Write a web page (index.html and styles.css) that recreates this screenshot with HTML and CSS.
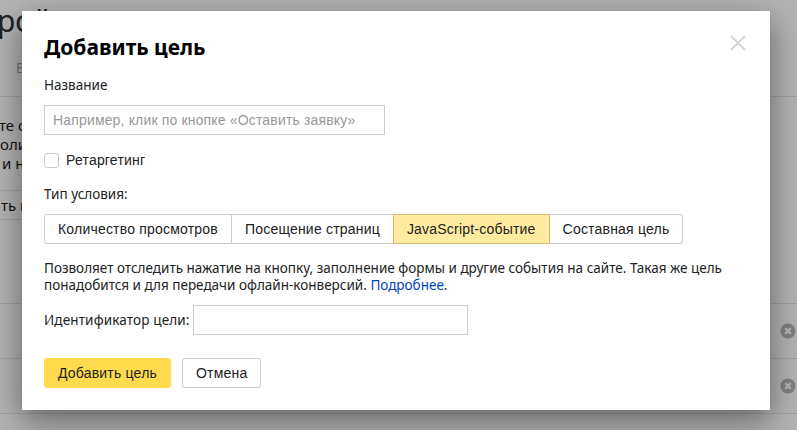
FILE: index.html
```html
<!DOCTYPE html>
<html lang="ru">
<head>
<meta charset="utf-8">
<title>Добавить цель</title>
<link rel="stylesheet" href="styles.css">
</head>
<body>
<div class="page">
  <div class="page-head">
    <div class="page-title">ройка</div>
    <div class="page-tab">Вебвизор</div>
  </div>
  <div class="page-info">
    <p class="info-a">те основные</p>
    <p>оличество</p>
    <p class="info-c">и не</p>
  </div>
  <div class="page-action"><span class="page-btn">ть цель</span></div>
  <div class="page-row"><svg class="row-x" viewBox="0 0 16 16"><circle cx="8" cy="8" r="7.5" fill="#7f7f7f"/><path d="M5.2 5.2l5.6 5.6M10.8 5.2l-5.6 5.6" stroke="#b2b2b2" stroke-width="2.4"/></svg></div>
  <div class="page-row"><svg class="row-x" viewBox="0 0 16 16"><circle cx="8" cy="8" r="7.5" fill="#7f7f7f"/><path d="M5.2 5.2l5.6 5.6M10.8 5.2l-5.6 5.6" stroke="#b2b2b2" stroke-width="2.4"/></svg></div>
  <div class="page-row page-row-last"></div>
</div>

<div class="modal">
  <svg class="modal-close" viewBox="0 0 16 16"><path d="M1 1l14 14M15 1L1 15" stroke="#d6d6d6" stroke-width="2" fill="none"/></svg>
  <h1 class="modal-title">Добавить цель</h1>
  <div class="label">Название</div>
  <input class="text-input name-input" type="text" placeholder="Например, клик по кнопке «Оставить заявку»">
  <label class="check"><span class="check-box"></span><span class="check-text">Ретаргетинг</span></label>
  <div class="label type-label">Тип условия:</div>
  <div class="segments">
    <span class="segment">Количество просмотров</span>
    <span class="segment">Посещение страниц</span>
    <span class="segment segment-on">JavaScript-событие</span>
    <span class="segment">Составная цель</span>
  </div>
  <p class="hint">Позволяет отследить нажатие на кнопку, заполнение формы и другие события на сайте. Такая же цель понадобится и для передачи офлайн-конверсий. <a href="#">Подробнее</a>.</p>
  <div class="id-row"><span class="label id-label">Идентификатор цели:</span><input class="text-input id-input" type="text"></div>
  <div class="actions">
    <button class="btn btn-primary" type="button">Добавить цель</button>
    <button class="btn" type="button">Отмена</button>
  </div>
</div>
</body>
</html>
```
FILE: styles.css
```css
* { box-sizing: border-box; }
html, body { margin: 0; height: 100%; }
body {
  width: 797px;
  height: 430px;
  overflow: hidden;
  position: relative;
  background: #b2b2b2;
  font-family: "Noto Sans", "Liberation Sans", sans-serif;
  color: #222;
}
.page { height: 430px; overflow: hidden; color: #111; font-size: 15px; }
.page-head { height: 97px; border-bottom: 1px solid #a0a0a0; }
.page-title { margin-left: -3px; padding-top: 2px; font-size: 30px; line-height: 38px; color: #222; }
.page-tab { margin-left: 16px; margin-top: 19px; color: #7c7670; font-size: 14px; line-height: 18px; }
.page-info { height: 93px; padding-top: 19px; }
.page-info p { margin: 0; line-height: 19px; white-space: nowrap; }
.info-a { margin-left: -1px !important; }
.info-c { margin-left: 2px !important; }
.page-action { height: 113px; }
.page-btn { display: block; width: 120px; height: 30px; margin-left: -40px; padding-left: 40px; border: 1px solid #a0a0a0; line-height: 28px; white-space: nowrap; }
.page-row { height: 55px; border-top: 1px solid #a0a0a0; display: flex; justify-content: flex-end; align-items: center; padding-right: 1px; }
.row-x { width: 16px; height: 16px; }
.page-row-last { height: 20px; }

.modal {
  position: absolute;
  left: 22px;
  top: 11px;
  width: 748px;
  height: 399px;
  background: #fff;
  padding: 20px 22px;
  box-shadow: 0 10px 30px rgba(0,0,0,.45);
}
.modal-close { position: absolute; left: 708px; top: 24px; width: 16px; height: 16px; }
.modal-title { margin: 0; font-size: 21px; line-height: 32px; font-weight: 700; color: #000; }
.label { font-size: 13.5px; line-height: 18px; color: #222; }
.modal-title + .label { margin-top: 13px; }
.text-input { display: block; height: 30px; border: 1px solid #ccc; border-radius: 0; background: #fff; outline: 0; padding: 0 8px; font: 14px "Liberation Sans", sans-serif; letter-spacing: .16px; }
.text-input::placeholder { color: #999; opacity: 1; }
.name-input { width: 341px; margin-top: 11px; }
.check { display: flex; align-items: center; margin-top: 17px; height: 16px; }
.check-box { width: 15px; height: 15px; border: 1px solid #ccc; border-radius: 3px; }
.check-text { margin-left: 7px; font: 14px "Liberation Sans", sans-serif; letter-spacing: .2px; color: #222; }
.type-label { margin-top: 17px; }
.segments { display: flex; margin-top: 11px; height: 30px; font: 14px/28px "Liberation Sans", sans-serif; letter-spacing: .2px; color: #222; }
.segment { border: 1px solid #ccc; border-left: 0; padding: 0 13px; background: #fff; white-space: nowrap; }
.segment:first-child { border-left: 1px solid #ccc; border-radius: 3px 0 0 3px; }
.segment:last-child { border-radius: 0 3px 3px 0; }
.segment-on { background: #ffeba0; border: 1px solid #d6bd6a; margin-left: -1px; }
.hint { margin: 16px 0 0; width: 690px; font-size: 13.5px; line-height: 17px; color: #222; }
.hint a { color: #04b; text-decoration: none; }
.id-row { display: flex; align-items: center; margin-top: 11px; }
.id-label { margin-right: 3px; letter-spacing: .14px; }
.id-input { width: 275px; }
.actions { display: flex; gap: 11px; margin-top: 23px; }
.btn { height: 30px; padding: 0 13px; border: 1px solid #ccc; border-radius: 3px; background: #fff; color: #222; font: 14px "Liberation Sans", sans-serif; letter-spacing: .2px; }
.btn-primary { background: #ffdb4d; border-color: #ffdb4d; }
```
